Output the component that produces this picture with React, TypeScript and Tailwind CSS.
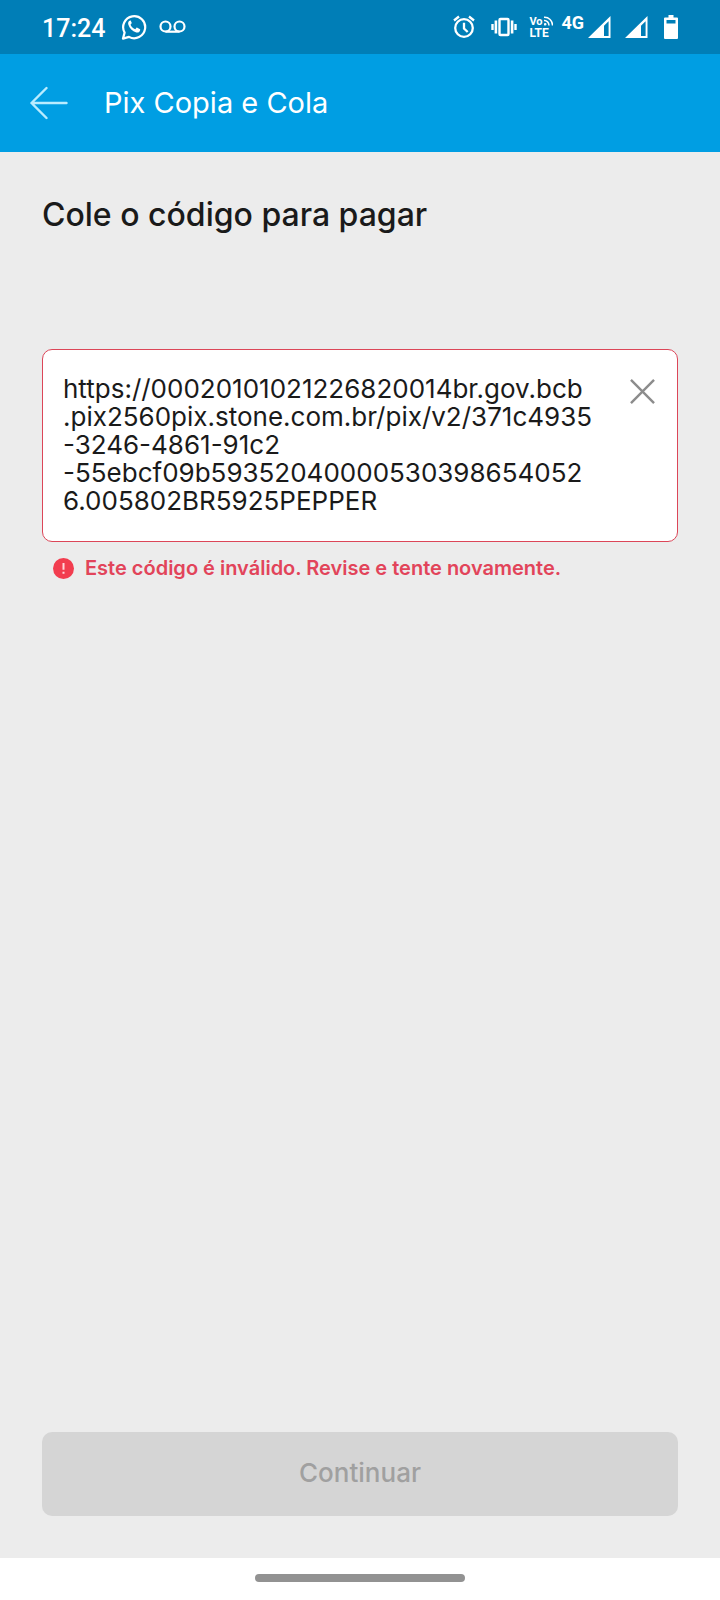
import { useState } from "react";

const INITIAL_CODE = [
  "https://00020101021226820014br.gov.bcb",
  ".pix2560pix.stone.com.br/pix/v2/371c4935",
  "-3246-4861-91c2",
  "-55ebcf09b59352040000530398654052",
  "6.005802BR5925PEPPER",
].join("\n");

function WhatsAppIcon() {
  return (
    <svg width="26" height="28" viewBox="0 0 26 28" fill="none" aria-hidden="true">
      <path
        d="M2 25.600 3.600 19.600A11 11 0 1 1 8 23.900Z"
        stroke="white"
        strokeWidth="2.200"
        strokeLinejoin="round"
      />
      <path
        d="M9.200 7.500c-1.800.6-2.400 2.200-1.900 4 1.200 4 4 6.800 8 7.900 1.900.4 3.600-.6 3.900-2.500.1-.6-.1-.8-.5-1l-2.400-1.200c-.4-.2-.7-.1-1 .3l-1 1.200c-2.300-.9-3.800-2.400-4.800-4.500l1-1.300c.2-.3.2-.5.1-.8l-.9-2c-.1-.2-.3-.2-.5-.1z"
        fill="white"
      />
    </svg>
  );
}

function VoicemailIcon() {
  return (
    <svg width="27" height="14" viewBox="0 0 27 14" fill="none" stroke="white" strokeWidth="2.200" aria-hidden="true">
      <circle cx="6.500" cy="6.500" r="5" />
      <circle cx="20.500" cy="6.500" r="5" />
      <path d="M6.500 11.700h14" />
    </svg>
  );
}

function AlarmIcon() {
  return (
    <svg width="22" height="24" viewBox="0 0 22 24" fill="none" stroke="white" strokeWidth="2.300" aria-hidden="true">
      <circle cx="11" cy="13" r="8.800" />
      <path d="M11 7.800v5.700l3.700 3.500M1 5.500 6 1.500M21 5.500l-5-4" />
    </svg>
  );
}

function VibrateIcon() {
  return (
    <svg width="26" height="20" viewBox="0 0 26 20" fill="none" stroke="white" aria-hidden="true">
      <rect x="8.500" y="2" width="9" height="16" rx="1" strokeWidth="2.400" />
      <path d="M4.900 3.500v13M21.100 3.500v13" strokeWidth="2.600" />
      <path d="M1.500 7v6M24.500 7v6" strokeWidth="2.400" />
    </svg>
  );
}

function VolteIcon() {
  return (
    <div className="flex w-6 flex-col text-xs leading-none font-bold">
      <div className="flex h-3 items-center gap-px text-[11px]">
        <span>Vo</span>
        <svg width="10" height="10" viewBox="0 0 10 10" fill="none" stroke="white" strokeWidth="1.500" aria-hidden="true">
          <path d="M0 1.200A8 8 0 0 1 8.600 9.500M0 4.600A4.600 4.600 0 0 1 5 9.500" />
          <circle cx="1.200" cy="8.300" r=".6" fill="white" />
        </svg>
      </div>
      <span>LTE</span>
    </div>
  );
}

function SignalIcon() {
  return (
    <svg width="23" height="22" viewBox="0 0 23 22" aria-hidden="true">
      <path d="M22.500 0v22H0Z M20.600 5.200 16 9.700V20h4.600Z" fill="white" fillRule="evenodd" />
    </svg>
  );
}

function BatteryIcon() {
  return (
    <svg width="14" height="24" viewBox="0 0 14 24" aria-hidden="true">
      <path
        d="M4.500 0h5v2.500H13a1 1 0 0 1 1 1V23a1 1 0 0 1-1 1H1a1 1 0 0 1-1-1V3.500a1 1 0 0 1 1-1h3.500Z M2.500 5v3.500h9V5Z"
        fill="white"
        fillRule="evenodd"
      />
    </svg>
  );
}

function StatusBar() {
  return (
    <div className="flex h-[54px] items-center justify-between bg-[#007eb7] px-[42px] font-['Roboto',sans-serif] text-white">
      <div className="flex items-center">
        <span className="mt-1 text-[25px] leading-8 font-medium">17:24</span>
        <span className="ml-4">
          <WhatsAppIcon />
        </span>
        <span className="ml-3">
          <VoicemailIcon />
        </span>
      </div>
      <div className="flex items-center">
        <AlarmIcon />
        <span className="ml-4">
          <VibrateIcon />
        </span>
        <span className="ml-3">
          <VolteIcon />
        </span>
        <span className="mb-2 ml-2 text-lg leading-5 font-bold">4G</span>
        <span className="ml-1">
          <SignalIcon />
        </span>
        <span className="ml-3.5">
          <SignalIcon />
        </span>
        <span className="ml-4">
          <BatteryIcon />
        </span>
      </div>
    </div>
  );
}

export default function App() {
  const [code, setCode] = useState(INITIAL_CODE);

  return (
    <div className="flex min-h-screen flex-col bg-[#ececec] font-['Inter',sans-serif] text-[#1a1a1a]">
      <StatusBar />
      <header className="flex h-[98px] items-center bg-[#009ee3] pl-[30px] text-white">
        <button type="button" aria-label="Voltar" className="flex">
          <svg width="38" height="34" viewBox="0 0 38 34" fill="none" stroke="#b9ecff" strokeWidth="2.400" strokeLinecap="round" strokeLinejoin="round" aria-hidden="true">
            <path d="M36.500 17H1.500M16.500 2 1.500 17l15 15" />
          </svg>
        </button>
        <h1 className="ml-9 text-[29px] leading-9">Pix Copia e Cola</h1>
      </header>

      <main className="flex grow flex-col px-[42px] pb-[42px]">
        <h2 className="mt-[41px] text-[32px] leading-11 font-medium">
          <label htmlFor="codigo">Cole o código para pagar</label>
        </h2>
        <div className="mt-28 flex items-start rounded-[10px] border border-[#dc4658] bg-white pt-[25px] pr-[22px] pb-[26px] pl-5">
          <textarea
            id="codigo"
            rows={5}
            value={code}
            onChange={(e) => setCode(e.target.value)}
            aria-invalid="true"
            aria-describedby="codigo-erro"
            spellCheck={false}
            className="block min-w-0 grow resize-none overflow-hidden text-[26px] leading-7 outline-none"
          />
          <button type="button" aria-label="Limpar" onClick={() => setCode("")} className="mt-1 flex">
            <svg width="25" height="25" viewBox="0 0 26 26" fill="none" stroke="#8c8c8c" strokeWidth="2.500" aria-hidden="true">
              <path d="M1 1l24 24M25 1 1 25" />
            </svg>
          </button>
        </div>
        <p id="codigo-erro" className="mt-3 flex items-center gap-[11px] pl-[11px] text-[20px] leading-7 font-semibold text-[#e2445a]">
          <svg width="21" height="21" viewBox="0 0 21 21" aria-hidden="true">
            <circle cx="10.500" cy="10.500" r="10.500" fill="#f23d4f" />
            <path d="M10.500 5v6.800M10.500 13.800v2" stroke="#ffd5d9" strokeWidth="2" />
          </svg>
          Este código é inválido. Revise e tente novamente.
        </p>
        <button type="button" disabled className="mt-auto h-[84px] w-full rounded-[10px] bg-[#d5d5d5] pb-1 text-[26px] font-medium text-[#a0a0a0]">
          Continuar
        </button>
      </main>

      <footer className="flex h-[42px] items-center justify-center bg-white">
        <div className="mb-0.5 h-2 w-[210px] rounded-full bg-[#929292]" />
      </footer>
    </div>
  );
}
